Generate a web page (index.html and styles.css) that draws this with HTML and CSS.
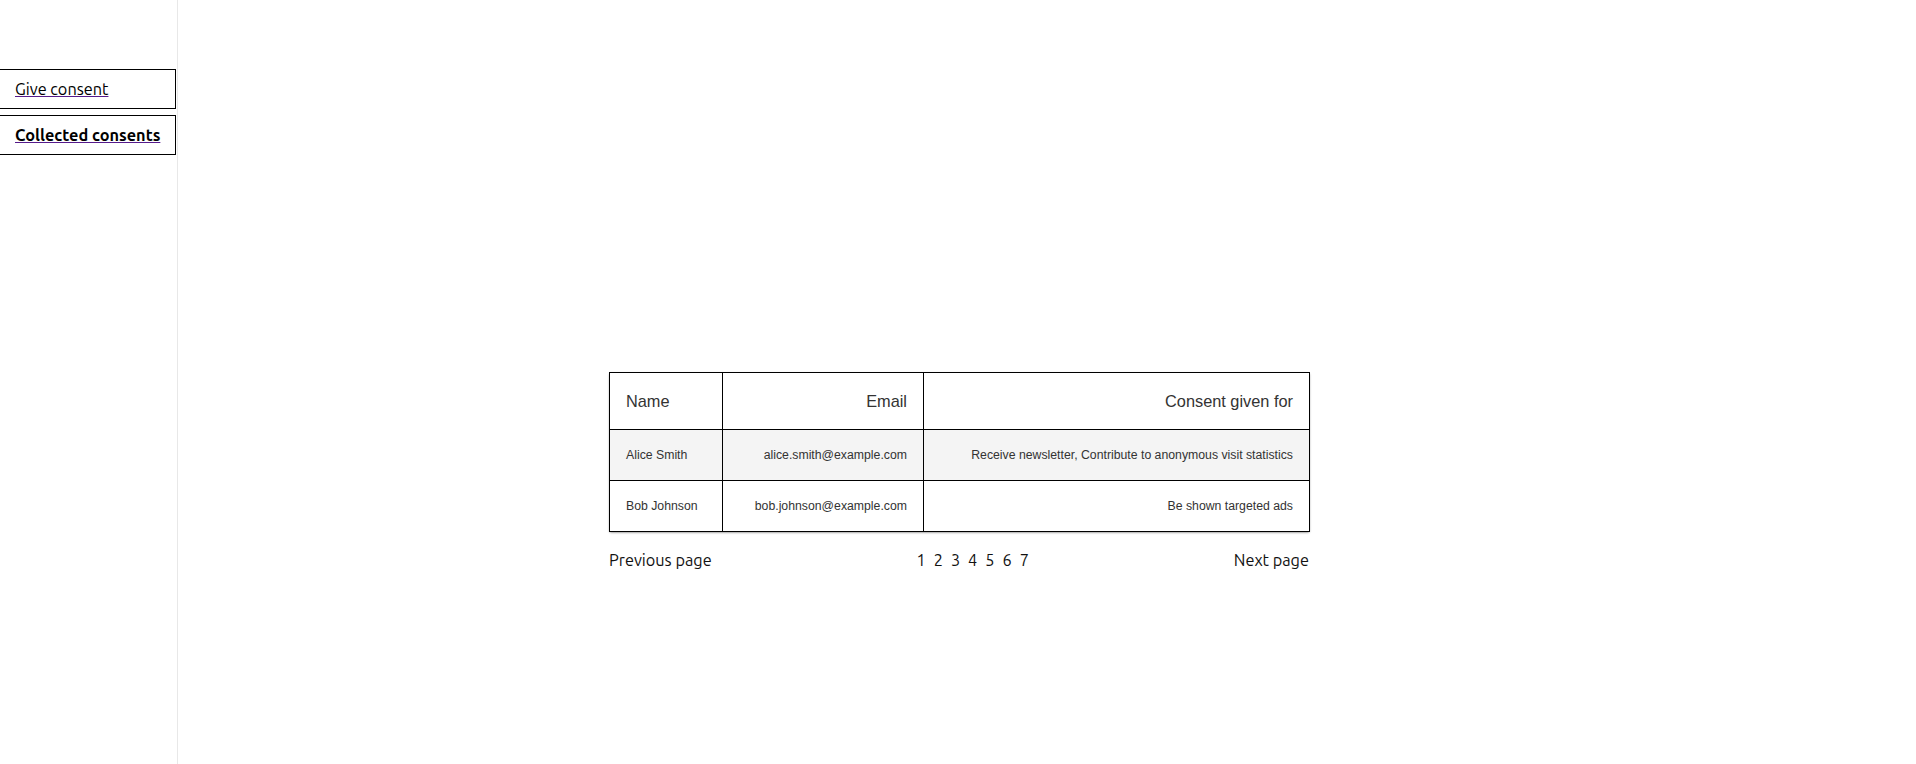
FILE: index.html
```html
<!DOCTYPE html>
<html lang="en">
<head>
<meta charset="utf-8">
<title>Collected consents</title>
<link rel="stylesheet" href="styles.css">
</head>
<body>
<div class="app">
  <nav class="sidebar">
    <a class="nav-link" href="#">Give consent</a>
    <a class="nav-link nav-link--active" href="#">Collected consents</a>
  </nav>
  <main class="main">
    <div class="content">
      <table class="consents">
        <colgroup>
          <col class="col-name">
          <col class="col-email">
          <col class="col-consent">
        </colgroup>
        <thead>
          <tr>
            <th class="left">Name</th>
            <th class="right">Email</th>
            <th class="right">Consent given for</th>
          </tr>
        </thead>
        <tbody>
          <tr class="odd">
            <td class="left">Alice Smith</td>
            <td class="right">alice.smith@example.com</td>
            <td class="right">Receive newsletter, Contribute to anonymous visit statistics</td>
          </tr>
          <tr>
            <td class="left">Bob Johnson</td>
            <td class="right">bob.johnson@example.com</td>
            <td class="right">Be shown targeted ads</td>
          </tr>
        </tbody>
      </table>
      <div class="pager">
        <a class="pager-link" href="#">Previous page</a>
        <div class="pager-pages">
          <a class="page-num" href="#">1</a>
          <a class="page-num" href="#">2</a>
          <a class="page-num" href="#">3</a>
          <a class="page-num" href="#">4</a>
          <a class="page-num" href="#">5</a>
          <a class="page-num" href="#">6</a>
          <a class="page-num" href="#">7</a>
        </div>
        <a class="pager-link" href="#">Next page</a>
      </div>
    </div>
  </main>
</div>
</body>
</html>
```
FILE: styles.css
```css
* { box-sizing: border-box; }
html, body { margin: 0; padding: 0; background: #fff; }
body { font-family: "Ubuntu", "Open Sans", "Noto Sans", sans-serif; color: #111; }

.app { display: flex; min-height: 764px; }

.sidebar {
  width: 178px;
  flex: 0 0 178px;
  border-right: 1px solid #e8e8e8;
  padding: 69px 1px 0 0;
  display: flex;
  flex-direction: column;
  gap: 6px;
}
.nav-link {
  display: block;
  border: 1px solid #000;
  border-left: none;
  padding: 9px 0 9px 15px;
  font-size: 16.3px;
  line-height: 20px;
  color: #000;
  text-decoration: underline;
  text-decoration-color: #551a8b;
}
.nav-link--active { font-weight: bold; }

.main { flex: 1; padding: 372px 176px 0 0; display: flex; justify-content: center; }
.content { width: 700px; }

.consents {
  width: 700px;
  table-layout: fixed;
  border-collapse: collapse;
  font-family: "Liberation Sans", Arial, sans-serif;
  color: #333;
  box-shadow: 0 1px 2px rgba(0,0,0,0.35);
  border-radius: 3px;
}
.col-name { width: 113px; }
.col-email { width: 201px; }
.col-consent { width: 386px; }
.consents th, .consents td { border: 1px solid #000; padding: 0 16px; }
.consents th { font-weight: normal; font-size: 16.33px; line-height: 18px; height: 57px; }
.consents td { font-size: 12.28px; line-height: 14px; height: 51px; }
.consents tr.odd td { background: #f4f4f4; }
.left { text-align: left; }
.right { text-align: right; }

.pager {
  display: flex;
  justify-content: space-between;
  align-items: center;
  margin-top: 18px;
  font-size: 16.3px;
  line-height: 20px;
}
.pager-link, .page-num { color: #111; text-decoration: none; }
.pager-pages { display: flex; gap: 8px; }
```
